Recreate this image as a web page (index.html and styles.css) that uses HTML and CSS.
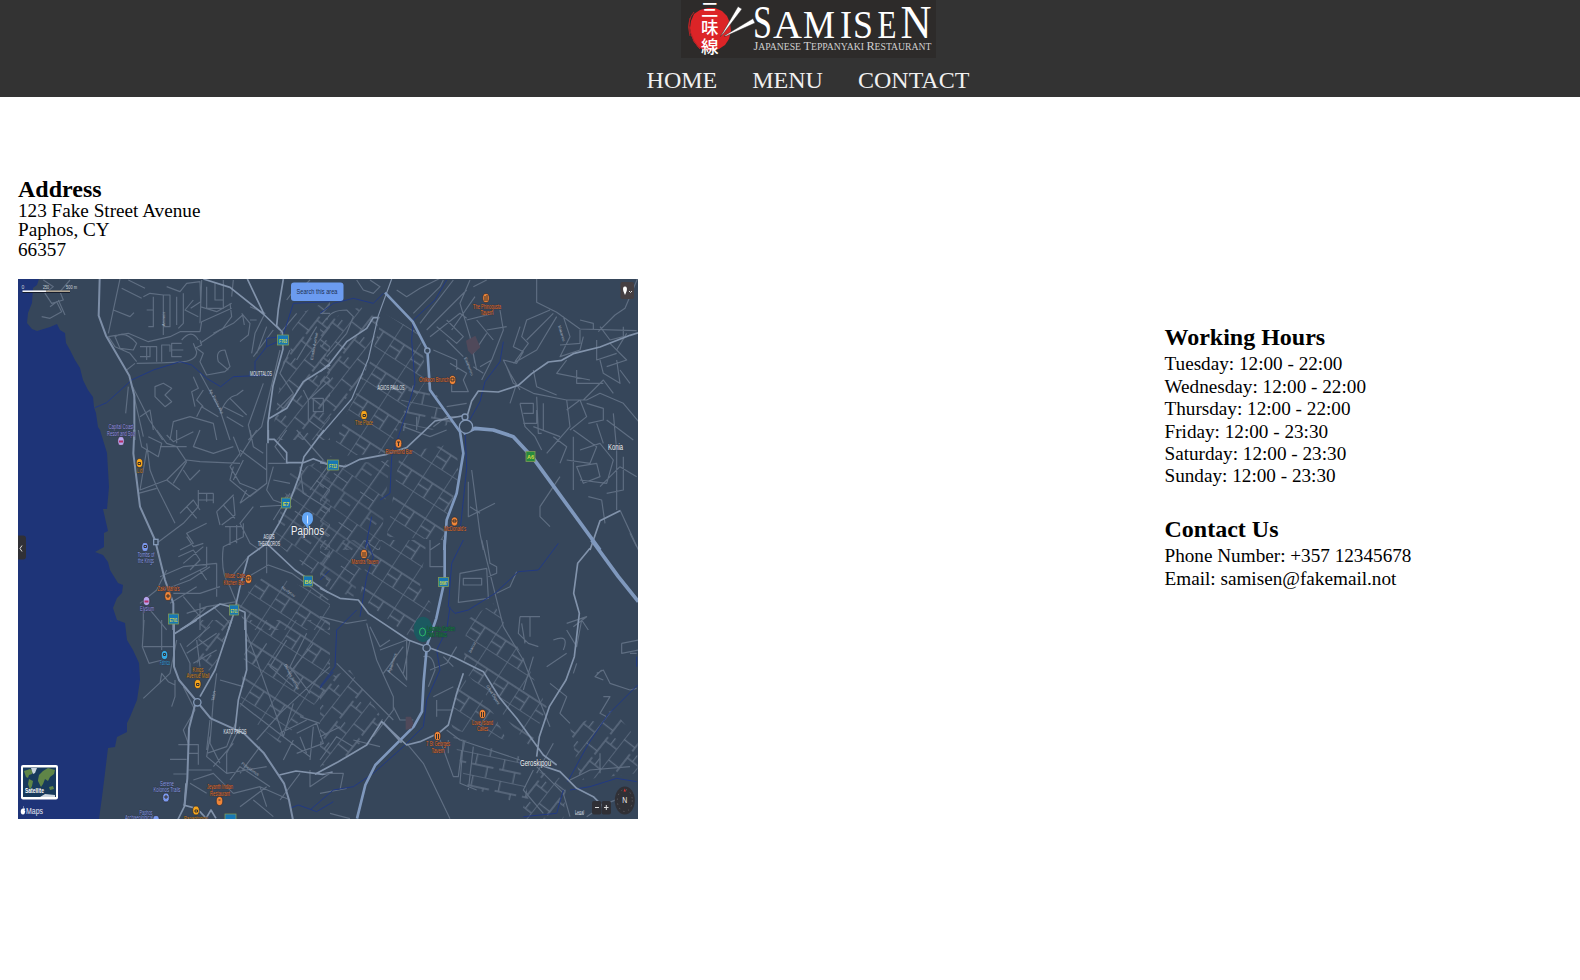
FILE: index.html
```html
<!DOCTYPE html>
<html lang="en">
<head>
<meta charset="utf-8">
<title>Samisen - Contact</title>
<link rel="stylesheet" href="styles.css">
</head>
<body>
<header class="header">
  <svg class="logo" viewBox="681 0 255 58" role="img" aria-label="Samisen">
    <rect class="logo-bg" x="681" y="0" width="255" height="58"/>
    <path class="logo-sun" d="M691 21l3-7 6-4 8-2 7 0 7 3 5 5 3 7 1 8-2 8-4 6-6 4-8 2-7-1-6-3-4-5-3-7-1-7z"/>
    <path class="logo-ring" d="M694 12q-7 8-4 19t10 18M690 18q-3 9 0 18M693 40l7 9"/>
    <g class="logo-kanji"><text x="701" y="16">三</text><text x="701" y="34">味</text><text x="701" y="53">線</text></g>
    <path class="logo-stick" d="M738 6.500l4 2.500L723 34l-2.500 2.500zM753 18.500l2 4.500-29 13-2 0z"/>
    <text class="logo-name" y="37.500"><tspan class="big" x="753" textLength="19" lengthAdjust="spacingAndGlyphs">S</tspan><tspan x="773" textLength="29" lengthAdjust="spacingAndGlyphs">A</tspan><tspan x="803" textLength="32" lengthAdjust="spacingAndGlyphs">M</tspan><tspan x="840" textLength="12" lengthAdjust="spacingAndGlyphs">I</tspan><tspan x="853" textLength="20" lengthAdjust="spacingAndGlyphs">S</tspan><tspan x="877.500" textLength="19" lengthAdjust="spacingAndGlyphs">E</tspan><tspan class="big" x="900.500" textLength="31" lengthAdjust="spacingAndGlyphs">N</tspan></text>
    <text class="logo-sub" x="753.500" y="50" textLength="178" lengthAdjust="spacingAndGlyphs"><tspan class="cap">J</tspan>APANESE <tspan class="cap">T</tspan>EPPANYAKI <tspan class="cap">R</tspan>ESTAURANT</text>
  </svg>
  <nav class="nav"><a>HOME</a><a>MENU</a><a>CONTACT</a></nav>
</header>
<main class="content">
  <section class="location">
    <h2>Address</h2>
    <p>123 Fake Street Avenue</p>
    <p>Paphos, CY</p>
    <p>66357</p>
    <svg class="map" viewBox="18 279 620 540" role="img" aria-label="Map of Paphos">
      <defs>
        <pattern id="gridA" width="62" height="84" patternUnits="userSpaceOnUse" patternTransform="rotate(33) scale(1.2)"><path class="st" d="M0 0H62M0 42H62M0 0V84M31 42V84M0 63H31"/></pattern>
        <pattern id="gridB" width="70" height="76" patternUnits="userSpaceOnUse" patternTransform="rotate(-52) scale(1.1)"><path class="st" d="M0 0H70M0 38H60M12 0V38M48 38V76M48 56H70"/></pattern>
        <pattern id="gridC" width="76" height="60" patternUnits="userSpaceOnUse" patternTransform="rotate(12) scale(1.1)"><path class="st" d="M0 0H76M0 30H60M10 0V30M44 30V60"/></pattern>
        <pattern id="gridD" width="96" height="112" patternUnits="userSpaceOnUse" patternTransform="rotate(35)"><path class="st" d="M0 0H96M0 56H96M0 28H50M14 0V112M50 0V56M60 56V112M60 80H96"/></pattern>
      </defs>
      <rect class="land" x="18" y="279" width="620" height="540"/>
      <path class="sea" d="M18 279H39L37 285 33 288 32 303 28 313 27 323 32 329 37 331 50 327 57 324 60 330 65 333 66 343 70 350 75 360 80 368 83 380 88 390 93 397 94 407 96 413 98 427 100 430 107 453 109 487 107 509 103 509 108 531 104 533V547L95 552 103 555 108 562 110 570 118 583 123 585 122 593 117 598 113 608 117 620 125 623 127 640 133 650 139 663 140 680 137 700 130 717 127 723V732L117 737 115 747 108 748 105 773 102 797 99 819H18z"/>

      <!-- north west -->
      <g transform="translate(0 160) scale(.33333)">
        <path fill="url(#gridB)" d="M850 600L990 450V840H815zM880 470L990 420V560L870 590z"/>
        <path class="st" d="M360 357L325 520M340 450l50 20 12-12M365 385l60 30M385 360l50 25M130 360l30 20-25 20 20 30 35-10-10-25 30-35M150 440l20-15 15 30-35 20-25-5M175 420l20 45"/>
        <path class="st" d="M430 410l20-10 40 5V525M460 410v90h-15M510 405V500H490V405zM530 410v85M550 400v90l-15 15M440 450h20M580 420l-25 30 40 20M600 490L605 360M500 380l40 15 20-25 40-5 2 60-30 20M600 440l50 15 45-25M620 380v65h50V360M645 370v50h25M700 360l-5 50"/>
        <path class="st" d="M325 530l60-10 60 25 65-15 30-15 60 0 5-30 90-40M600 540l5 15-20 10M600 550l60-40 40-20 28-25 5 30M690 430l5 40-30 40M545 540q30-35 50 0M325 530l20 30 45 20 20 25M345 530q30-20 65 20l-10 20-40-5zM410 610q80 0 140-5 40-5 40-30l-10-25M420 560h30v30h-30M440 600v-40h30v45M485 605v-50h25v20M545 550h-30v40h30M515 570h35"/>
        <path class="st" d="M590 565l20 15-10 25 20 40 55-10 15-15-15-50q-30 0-20 35l30 25M640 520l30-15M725 460l25 30-5 35-25 20M750 440l45 20-30 60-10 60M770 480h-20M800 500l-30 80M820 510l-60 80M840 570l-55 230-40 40M870 570l-30 70 40 60-50 50M790 670l-45 125 10 45"/>
        <path class="st" d="M380 630l25-20M398 680l20 40 30 60 40 60M385 680l-8 80M400 700l30 130M465 680l25-10 25 15-20 20 20 20-20 15-30-30zM420 770l30-20 10 60M510 840l10-55 50-15 70 20 10 50M580 650l15 35-20 10 10 45M600 640l60 110 30 90M610 690l-20 30 20 20M590 770l15-30 50 30M660 760q20-50 50-55l20-15M670 740l60 30M690 715l50 50M680 770l50 30M860 420l30-40 100 0M890 460l-50 60M930 360l-50 50M950 500l-60 100M910 690l15 30 65-60M925 720v60l40 30M940 715h30v40h-30z"/>
        <path class="river" d="M285 743L320 728 395 660 460 630 540 605 575 615 620 655 662 680 700 650 815 645M765 650l0-45 35-45 45-20 35-110 110-5M800 560v-25l45-5"/>
        <path class="road" d="M610 357l80 25 100 80 50 48M742 357l50 105M850 357l-15 90-5 50 17 20 2 50-30 110-15 110v63M805 777L860 745 910 665 990 615"/>
        <path class="roadb" d="M299 357l-3 110 22 60 70 120 15 60v133"/>
      </g>

      <!-- north east -->
      <g transform="translate(320 270) scale(.33333)">
        <path fill="url(#gridB)" d="M0 160L120 110 180 140 130 330 0 470z"/>
        <path fill="url(#gridA)" d="M190 130L300 190 320 330 250 440 200 550 30 560 80 430 140 310z"/>
        <path fill="url(#gridD)" d="M0 590L210 570 180 840H0z"/>
        <path fill="url(#gridC)" d="M250 350L330 340 400 460 300 490 230 480z"/>
        <path fill="url(#gridA)" d="M240 550L410 520 415 620 370 810 200 800z"/>
        <path class="st" d="M110 30l20 30 30 10 20-20-30-20M20 150q10-30 60-30l20 20-20 50-60 70M0 130h30M230 60l30 20 40-25 60-30M280 130l80-80 10-20M300 160L400 30M320 180L440 60M330 200l90-70 20 15M350 170l60 50 20-20-50-50M380 210l50 50M340 240l70 30v30M390 280l50 30-10 20 15 35-50 0 0-40M450 30l-30 70 30 100 15 80M460 50l40-20M465 80l-70 100M540 120l10 60-35 90-30 60M500 190l-40 60 10 50M470 150l50 60M520 130l-80 20M515 270l-35 20"/>
        <path class="st" d="M650 27v70l60 30 70 50 170 5M700 130l-80 80M710 140l-60 100-70 40M690 120l-70 30-15 50 20 20-40 55M600 170l-20 60 30 15-20 35-40-10 20 40 30 50M730 140l20 60-30 60 60-20 10-40M780 180v40l-60 5M780 150l40 10v20M840 170l30 40 40-10 0-30M835 185l50-50 30-20 38-90M830 210v60l60-20M870 220l50 50-60 20M920 190l-30 50M740 270l-30 40 100 20M840 270l10 40 50 30-10-70M770 300v40l80 0M900 300l30 40M640 300l10 50 60 25M560 290l20 50 60 30 100 20 60 0 40-20 70 30 50 60M570 400l20-60M600 400l15 70 30 30 20 40M600 400h40v30h-30M610 460h40v-40M650 380l5 110 10 0M670 400v80M740 390l10 80-70 80M740 420l40-30 20 50-50 40M790 390l60-60 30 40M800 400l50 15v35l-45 10M760 480l70 50-20 50-70-10M700 500l40 30-20 50M780 540l60-20 40 50-20 70-80-10M880 430l10 110 0 180M860 450l80 60M900 590l50 30M830 460l20 60M640 470l80 30M760 500v160M770 590l60-10 10 40-50 20zM840 650l60-60M910 560v100l-50 10M805 680l40 10 10 70"/>
        <path class="st" d="M720 620l-60 90 0 30 30 30M455 600l25 190 10 50M445 635v105l80-40M450 710l30 20M340 470l40-30 40 0M440 400l-60 10M250 470l80 30 50-20M290 440l0 40M460 290l30 20M500 180l60-10M900 720l60 130"/>
        <path class="river" d="M0 130l40-30 60-15 60 15 30-30M380 30l-35 60-65 60-5 60 10 130-30 100-40 120-5 110-30 20M550 215l-10 60-45 60-15 60-45 80 5 120-20 190M155 740l-20 100"/>
        <path class="road" d="M0 305l30-25 50-65 60-40 20-32h15"/><path class="road thin" d="M215 27l-40 110-30 130-50 120L0 498"/><path class="road" d="M0 578l75 12 45-22 80-15 60-20 85-80 80-15 15 5 15-50 20-30 60 3 60-20 40-35 50-35 40-5 35-20 80-20 90-35 50-15M900 722l-60 30-30 88"/>
        <path class="roadc" d="M195 68L278 155 322 240 330 360 420 485 430 550 410 670 380 750 373 840"/>
        <path class="roadd" d="M430 490l35-15 55 5 60 20 60 65L840 840"/>
        <circle class="round" cx="438" cy="470" r="20"/><circle class="round" cx="435" cy="441" r="9"/><circle class="round" cx="322" cy="242" r="8"/>
        <path class="building" d="M438 212l28-15 15 35-25 22-12-12z"/>
      </g>

      <!-- west -->
      <g transform="translate(0 430) scale(.33333)">
        <path fill="url(#gridD)" d="M870 130L990 80V480L820 330z"/>
        <path fill="url(#gridA)" d="M800 430L990 500V600H740L710 520z"/>
        <path class="st" d="M415 0l10 50 50 30 10-40-40-20M440 40l10 80 20 50 55 110M440 60l-20 120 80-30 60-60 40 5 120 5M470 0l30 40 30 10 30 45M500 15l20 20 60-30M600 0l-20 50 60 20 60-20M480 50l80 0M530 40v-40M700 20l20 50-30 40 30 50 50 20M700 110l-10 40 60 50 50-40M770 0l-50 80M720 60l80 60M730 90l-30 60M750 0l10 50 30 20M800 40v120l-80 60M820 110l-20 70 20 30 55 20M805 100l60 0M820 150l50 10M740 180l-20 40"/>
        <path class="st" d="M415 190l55-15M550 120l20 30 30-30M500 150l40 30M560 95l-40 65M595 190h45M595 210h45M595 180v50l-45 50-80 60M620 190v25M640 190v30M540 250l40-40 20 30M560 230l30 35M650 245l50-50-30 30 35 40M650 245l10 40M700 200l5 55-40 30M540 360l40-20-20-30 60-30M560 320l20 30 30-10M535 380l45-20 20 30-30 30M550 400l60-50M620 350v60l-80 40M600 420l20 30M670 350l60-30v-40M690 290v55M710 285v55M675 290h50M670 350q-10 80 20 120l20 50M650 400v100M480 440l70-30 100-10M490 480l80-30 60-40M520 490l80 0 60-20M510 520l80-50M550 500l50 60M560 550l60-20 90-15M600 520v80M450 540l50 60M430 600v-60M420 520l50-40 30-60M640 530l50 50M560 590l60-60M760 230l-40 50 30 60 30 20M780 230l80-5M745 380l-50 60M745 440l60-35 70 25 110 80M800 350l0 80M860 0l-35 50 30 40M890 0l80 90M820 270l50-80M900 110l10 80 80 50M930 180l60-80"/>
        <path class="river" d="M990 420l-30 30"/>
        <path class="road" d="M805 0v28h18l37 40v30h50l30-12 50 20M972 0l-60 80-15 60-30 80-30 60-35 60M800 340l-55 40-25 90-10 45M800 340l85 80 100 68M540 600l120-78 40 10 35 15v53M710 515l-5 25-20 60M860 98h30"/>
        <path class="roadb" d="M403 0l-3 70 20 160 45 100 30 120 25 70v80"/>
        <rect class="round" x="461" y="328" width="13" height="16"/>
      </g>

      <!-- south west -->
      <g transform="translate(0 620) scale(.33333)">
        <path fill="url(#gridA)" d="M740 0H990V200L840 370 720 270z"/>
        <path fill="url(#gridB)" d="M600 0H690L640 160 590 130z"/>
        <path class="st" d="M432 0l-5 80 20 50 40-10M485 0v90M430 80l90 0M530 60l-20 100-80 75M480 190l5-30 20 25 20 10M525 180v50l-10 30M540 70l30 60 0 40M560 80l70-60M560 100l90-60M580 130l70-40M600 140l-10-80M550 200l35 70-35 60 15 40M650 160l-10 80-10 130 30 60M660 180l70 20M740 40l30 80 60 170 20 60M800 70l-40 60M860 60l-50 80 70 60M920 40l-50 100 60 80M940 70l-80 100M990 140l-150 140-70 80M840 340l80-40M850 350l30-100M720 250l130 100 80 60M630 300l-10 90M510 418h50M520 462h40M535 374h60v60M565 400h30M565 450h70M630 350l-10 60 60 50 120-20M620 400l60-20 30-80M640 440l60-70M680 400v60M720 320l-40 80M720 460l60-80M690 480l30-40 90 60M580 480l60-20 60 60M570 490l50 30M700 520l80-20 90 40M720 560l80-60M780 500l20 60M760 540l60 50M900 460l-60 80M930 450v50l60-40M890 340l60-30 20 60-80 30M900 350l20 50M940 320l-10 100M880 360l-30 60M900 290l60 20"/>
        <path class="river" d="M960 205l40-50M870 565l25-10 55 20 50-30"/>
        <path class="road" d="M590 0l-68 42M695 0l-50 150-45 80M737 0l3 150-25 90-10 90M550 555l30 8 20 12 18 20 15-25 15 25M558 490l-5 70-20 40M838 465l50-12 80 10 30-7"/>
        <path class="roadb" d="M522 0v140l15 40 50 60 45 55 100 45 60 60 60 90 15 50 12 60M585 255l-18 70-5 150-8 80"/>
        <circle class="round" cx="592" cy="247" r="11"/>
      </g>

      <!-- south east -->
      <g transform="translate(320 540) scale(.33333)">
        <path fill="url(#gridD)" d="M0 0H150L100 170 0 140z"/>
        <path fill="url(#gridA)" d="M150 0H320L300 140 340 200 280 300 120 170z"/>
        <path fill="url(#gridA)" d="M440 240L520 190 620 370 680 500 630 620 520 490 430 390z"/>
        <path fill="url(#gridB)" d="M0 420L90 390 190 540 80 650 0 680z"/>
        <path fill="url(#gridC)" d="M400 590L600 650 630 800 440 740z"/>
        <path fill="url(#gridA)" d="M420 400L520 520 560 600 400 570 390 540z"/>
        <path fill="url(#gridB)" d="M750 560L880 510 953 600V700L780 720zM640 690L740 720 730 836H600z"/>
        <path class="st" d="M330 30l30-20M330 0v80l40 0M420 100l80-15 5 90-90 12zM430 115h55v20h-55zM500 0l10 70 20 10v20l-25 10M485 0l35 140 30 120 60 100 80 200M530 160l40-20 20-45M600 230l60 0M600 230l-5 50 30 30 30 10M605 250l10 60M630 230v60M700 300q50-20 30 30M740 250l60-20-40 30M740 270l30 50 15-80 20 30M770 370l-10 30M905 310l50-10M905 310v30l50-10M930 340l20 0M830 400l20-10 20 40 60 20 20-5M850 420l-25-10 20-20M850 470l20 0-30 50 20 10M640 350l-30 100M680 380l60-40M690 430l50 40-20 50 30 30M0 230l80 20 60-10M50 370l170 170M140 250l30 110 50 110v40l-60 80M150 260l30 60 30-20M180 330l80-30 0 120-30-50M200 390l60 50M190 400l60-80M310 350q30-10 35 40l-20 50M330 390l50-20 30-50M340 470l60-30M350 510l50 0M270 300l-20 100M380 570l40 30 180 60M0 660l50-70 50 30M0 590l60-30M100 600l80 20M10 700l60 0-10 50M0 760l80-15M30 820l60 16"/>
        <path class="st" d="M260 610l50 60 80 166M360 600l40 110 15 0 10-80M385 600v40M430 600l-10 130 50 20M460 620l-15 130M370 350l30 30M350 530l0-50M750 720l60-30 120-10M840 700v-60M640 690l-30 60 60 70M650 680l80 80 20 70M800 830l60-40 80-30M950 20l-20-40M700 610l-50 90M220 500l20 40h40"/>
        <path class="river" d="M430 0l-35 70-10 130 20 20 40-10 80-50 70-65 60-5 60-80M390 200l-10 70-30 60 10 60-40 90-10 80-60 60-90 80-60 40-60 10-70 60M140 0l20 50-20 60-20 120M110 210l-60 60-5 110L0 440M953 435l-90 90-60 90-60 110M750 750l60-10 80-25 60 10M950 350v30M730 750l-20 70-100 10"/>
        <path class="road" d="M0 145l60 30 55 5 30 40 60 40 60 40 55 20 80 30 90 45 50 80 50 60 80 110 40 30M430 400l-20 60-25 95-30 25-55 25-40 10-75-70-45 70-85 50-70 38M810 25l-37 45-12 90 17 60-15 130-25 70-50 80-30 90-8 60M660 675l60 20 50 50 50 25 40 40"/>
        <path class="roadc" d="M374 0v120l-25 115-28 80-10 110-5 90-25 45-115 115-30 60-25 101"/>
        <path class="roadd" d="M815 0l80 110 60 75"/>
        <path class="roadb" d="M190 548l55 60"/>
        <circle class="round" cx="320" cy="324" r="11"/>
        <ellipse class="park" cx="309" cy="268" rx="28" ry="38"/>
        <path class="building" d="M257 530h16l7 20-5 15-18 5z"/>
      </g>

      <!-- road shields -->
      <g class="shield">
        <rect x="277.500" y="335" width="11" height="10"/><rect x="327.500" y="460" width="11" height="10"/><rect x="281.500" y="498" width="9" height="10"/><rect x="303.500" y="576" width="9" height="10"/><rect x="438.500" y="577.500" width="10" height="9"/><rect x="229.500" y="605" width="9" height="10"/><rect x="168.500" y="614" width="10" height="10"/><rect x="225" y="814" width="11" height="9"/>
        <rect class="green" x="526" y="451.500" width="9" height="10"/>
      </g>
      <g class="shield-text">
        <text x="283" y="342.500" textLength="8" lengthAdjust="spacingAndGlyphs">F703</text><text x="333" y="467.500" textLength="8" lengthAdjust="spacingAndGlyphs">F712</text><text x="286" y="505.500">E7</text><text x="308" y="583.500">B6</text><text x="443.500" y="584.500" textLength="8" lengthAdjust="spacingAndGlyphs">B6M7</text><text x="234" y="612.500" textLength="7" lengthAdjust="spacingAndGlyphs">E701</text><text x="173.500" y="621.500" textLength="8" lengthAdjust="spacingAndGlyphs">E701</text><text x="530.500" y="459">A6</text>
      </g>

      <!-- places of interest -->
      <g class="poi orange">
        <ellipse cx="486" cy="298" rx="3.300" ry="4.500"/><ellipse cx="452.500" cy="380" rx="3.300" ry="4.500"/><ellipse cx="398.500" cy="443.500" rx="3.300" ry="4.500"/><ellipse cx="454.500" cy="521.500" rx="3.300" ry="4.500"/><ellipse cx="364" cy="554" rx="3.300" ry="4.500"/><ellipse cx="248.500" cy="579" rx="3.300" ry="4.500"/><ellipse cx="168" cy="596" rx="3.300" ry="4.500"/><ellipse cx="482.500" cy="714" rx="3.300" ry="4.500"/><ellipse cx="437.500" cy="736" rx="3.300" ry="4.500"/><ellipse cx="219.500" cy="801" rx="3.300" ry="4.500"/>
        <path class="mark" d="M485 296v5M487 295v6M451 378h3v3h-3zM397 442h3M398.500 442v4M453 520h3v2h-3zM363 552v5M365 552v5M247 577h3v3h-3zM167 595h2v2h-2zM481.500 712v5M483.500 712v5M436.500 734v5M438.500 734v5M218.500 800h2"/>
        <text x="487" y="308.500" textLength="28" lengthAdjust="spacingAndGlyphs">The Phinogusta</text><text x="487" y="314.500" textLength="13" lengthAdjust="spacingAndGlyphs">Tavern</text><text x="434" y="382" textLength="30" lengthAdjust="spacingAndGlyphs">Onikoon Brunch</text><text x="399" y="453.500" textLength="27" lengthAdjust="spacingAndGlyphs">Richmond Bar</text><text x="455" y="531" textLength="22" lengthAdjust="spacingAndGlyphs">McDonald's</text><text x="365" y="564" textLength="27" lengthAdjust="spacingAndGlyphs">Mandra Tavern</text><text x="235" y="578" textLength="20" lengthAdjust="spacingAndGlyphs">Muse Cafe</text><text x="234" y="584.500" textLength="21" lengthAdjust="spacingAndGlyphs">Kitchen Bar</text><text x="168.500" y="590.500" textLength="22" lengthAdjust="spacingAndGlyphs">Zaki Maria's</text><text x="482.500" y="724.500" textLength="21" lengthAdjust="spacingAndGlyphs">Love Island</text><text x="482.500" y="730.500" textLength="11" lengthAdjust="spacingAndGlyphs">Cakes</text><text x="438" y="746" textLength="24" lengthAdjust="spacingAndGlyphs">7 St Georges</text><text x="438" y="752.500" textLength="13" lengthAdjust="spacingAndGlyphs">Tavern</text><text x="220" y="789" textLength="26" lengthAdjust="spacingAndGlyphs">Jeyanth Indian</text><text x="220" y="795.500" textLength="20" lengthAdjust="spacingAndGlyphs">Restaurant</text>
      </g>
      <g class="poi yellow">
        <ellipse cx="364" cy="415" rx="3.300" ry="4.500"/><ellipse cx="139.500" cy="463" rx="3.300" ry="4.500"/><ellipse cx="197.700" cy="684" rx="3.300" ry="4.500"/><ellipse cx="196" cy="810.500" rx="3.300" ry="4.500"/>
        <path class="mark" d="M363 414.500h2.500v2h-2.500zM138 462.500h2.500v2h-2.500zM196.500 683.500h2.500v2h-2.500zM195 810h2.500v2h-2.500z"/>
        <text x="364" y="425" textLength="18" lengthAdjust="spacingAndGlyphs">The Place</text><text x="140" y="473" textLength="6" lengthAdjust="spacingAndGlyphs">Lidl</text><text x="198" y="672" textLength="11" lengthAdjust="spacingAndGlyphs">Kings</text><text x="198" y="678" textLength="23" lengthAdjust="spacingAndGlyphs">Avenue Mall</text><text x="196" y="820.500" textLength="24" lengthAdjust="spacingAndGlyphs">Papantoniou</text>
      </g>
      <g class="poi blue">
        <ellipse cx="145" cy="547" rx="3.300" ry="4.500"/><ellipse cx="166" cy="797.500" rx="3.300" ry="4.500"/><ellipse cx="156" cy="820" rx="3.300" ry="4.500"/>
        <path class="mark" d="M144 545.500h2.500v2h-2.500zM165 796h2v2h-2z"/>
        <text x="146" y="557" textLength="17" lengthAdjust="spacingAndGlyphs">Tombs of</text><text x="146" y="563" textLength="16" lengthAdjust="spacingAndGlyphs">the Kings</text><text x="167" y="785.500" textLength="14" lengthAdjust="spacingAndGlyphs">Serene</text><text x="167" y="791.500" textLength="27" lengthAdjust="spacingAndGlyphs">Kolonos Trails</text><text x="146" y="814.500" textLength="13" lengthAdjust="spacingAndGlyphs">Paphos</text><text x="139" y="820" textLength="28" lengthAdjust="spacingAndGlyphs">Archaeological</text>
      </g>
      <g class="poi violet">
        <ellipse cx="121" cy="441" rx="3.300" ry="4.500"/><ellipse cx="146.500" cy="601" rx="3.300" ry="4.500"/>
        <path class="bed" d="M119 441.500h4M144.500 601.500h4"/>
        <text x="121" y="429" textLength="25" lengthAdjust="spacingAndGlyphs">Capital Coast</text><text x="121" y="435.500" textLength="28" lengthAdjust="spacingAndGlyphs">Resort and Spa</text><text x="147" y="611" textLength="14" lengthAdjust="spacingAndGlyphs">Elysium</text>
      </g>
      <g class="poi cyan"><ellipse cx="164.500" cy="655" rx="3.300" ry="4.500"/><path class="mark" d="M163.500 653.500h2v2h-2z"/><text x="165" y="665" textLength="10" lengthAdjust="spacingAndGlyphs">Fabrica</text></g>
      <g class="poi garden"><ellipse class="outline" cx="422.500" cy="632" rx="3" ry="4"/><text x="441" y="631" textLength="28" lengthAdjust="spacingAndGlyphs">Latomia Garden</text><text x="437" y="637" textLength="20" lengthAdjust="spacingAndGlyphs">Park Rikkos</text></g>

      <!-- towns and districts -->
      <g class="district">
        <text x="261" y="376" textLength="22" lengthAdjust="spacingAndGlyphs">MOUTTALOS</text><text x="391" y="389.500" textLength="27" lengthAdjust="spacingAndGlyphs">AGIOS PAVLOS</text><text x="269" y="539" textLength="11" lengthAdjust="spacingAndGlyphs">AGIOS</text><text x="269" y="546" textLength="22" lengthAdjust="spacingAndGlyphs">THEODOROS</text><text x="235" y="733.500" textLength="23" lengthAdjust="spacingAndGlyphs">KATO PAFOS</text>
      </g>
      <text class="town" x="615.500" y="450" textLength="15" lengthAdjust="spacingAndGlyphs">Konia</text>
      <text class="town" x="535.500" y="765.500" textLength="31" lengthAdjust="spacingAndGlyphs">Geroskipou</text>
      <path class="pin" d="M307.500 529l-2-4q-3.500-2.500-3.500-6 0-7 5.500-7t5.500 7q0 3.500-3.500 6z"/>
      <path class="pinmark" d="M307.500 515.500v8"/>
      <text class="city" x="307.500" y="534.500" textLength="33" lengthAdjust="spacingAndGlyphs">Paphos</text>
      <g class="streetname">
        <text transform="translate(313 360) rotate(-80)">Ellados Avenue</text><text transform="translate(209 390) rotate(63)">Ap. Pavlou Ave</text><text transform="translate(471 653) rotate(-64)">Ikarou</text><text transform="translate(486 686) rotate(58)">Griva Digeni</text><text transform="translate(390 673) rotate(-70)">Agapinoros</text><text transform="translate(284 665) rotate(62)">Danaes Avenue</text><text transform="translate(164.500 326) rotate(-90)">Arsinois</text><text transform="translate(214 701) rotate(-80)">Tafon</text><text transform="translate(241 764) rotate(36)">Poseidonos</text><text transform="translate(464 358) rotate(68)">Eleftheriou</text><text transform="translate(558 326) rotate(73)">Makariou</text><text transform="translate(281 588) rotate(35)">Neofytou</text>
      </g>

      <!-- map controls -->
      <path class="scale-shadow" d="M22.500 292.500H70"/><path class="scale" d="M22.500 291.200H46"/><path class="scale-end" d="M46 291.200H70"/>
      <g class="scale-text"><text x="23" y="288.500">0</text><text x="46" y="288.500" textLength="6" lengthAdjust="spacingAndGlyphs">250</text><text x="71.500" y="288.500" textLength="11" lengthAdjust="spacingAndGlyphs">500 m</text></g>
      <rect class="search" x="291" y="282.500" width="52.500" height="18.500" rx="3"/>
      <text class="search-text" x="317" y="294" textLength="41" lengthAdjust="spacingAndGlyphs">Search this area</text>
      <rect class="control brown" x="620.500" y="282" width="13.500" height="17" rx="2"/>
      <path class="white" d="M625 295l-1.700-4q-1-4.500 1.700-4.500t1.700 4.500z"/><path class="chev" d="M629 291l1.500 1.500 1.500-1.500"/>
      <path class="control" d="M18 535.500h5q3 0 3 3v18q0 3-3 3h-5z"/><path class="chev" d="M22 545.500l-2 3 2 3"/>
      <rect class="white" x="21" y="765" width="37" height="34.500" rx="2"/><rect class="satellite" x="23" y="767.500" width="33" height="29.500"/>
      <path class="continents" d="M24 771l6-2 3 2-1 3-3 1-1 3-2-1zM29 779l4 2-1 5-2 4-2-6zM38 780l1-5 4-4 5-3 7 2-1 4-4 3-2 4-3-2-2 5-2 3-3-6zM49 787l4-1 1 3-4 1z"/>
      <path class="ice" d="M31 768h6l-2 5-2 1zM40 797h15v-2l-10-1z"/>
      <text class="sat-text" x="25" y="793" textLength="19" lengthAdjust="spacingAndGlyphs">Satellite</text>
      <path class="white" d="M23 808q.2-1.500 1-2 .2 1.500-1 2zM22.700 808.500q2-.8 2.300.4-1 1.600.3 2.600-.8 3.500-2.300 2.800-1.500.7-2.200-1.700-.4-3.500 1.900-4.100z"/>
      <text class="maps-text" x="26" y="814" textLength="17" lengthAdjust="spacingAndGlyphs">Maps</text>
      <text class="legal" x="579.500" y="813.500" textLength="9" lengthAdjust="spacingAndGlyphs">Legal</text>
      <rect class="control" x="592" y="801" width="9.300" height="13.500" rx="2"/><rect class="control" x="601.700" y="801" width="9.300" height="13.500" rx="2"/><path class="chev" d="M595 807.500h4M604 807.500h4.500M606.300 805v5"/>
      <ellipse class="control" cx="624.800" cy="800.500" rx="10" ry="14"/><ellipse class="dial" cx="624.800" cy="800.500" rx="7.500" ry="11"/><path class="red" d="M624.800 788.500l1.200 3h-2.400z"/>
      <text class="north" x="624.800" y="803" textLength="5" lengthAdjust="spacingAndGlyphs">N</text>
    </svg>
  </section>
  <section class="details">
    <h2>Working Hours</h2>
    <ul>
      <li>Tuesday: 12:00 - 22:00</li><li>Wednesday: 12:00 - 22:00</li><li>Thursday: 12:00 - 22:00</li><li>Friday: 12:00 - 23:30</li><li>Saturday: 12:00 - 23:30</li><li>Sunday: 12:00 - 23:30</li>
    </ul>
    <h2>Contact Us</h2>
    <ul><li>Phone Number: +357 12345678</li><li>Email: samisen@fakemail.not</li></ul>
  </section>
</main>
</body>
</html>
```
FILE: styles.css
```css
* { box-sizing: border-box; margin: 0; padding: 0; }
body { font-family: "Liberation Serif", serif; background: #fff; color: #000; }
.header { height: 97px; padding-left: 37px; background: #333; display: flex; flex-direction: column; align-items: center; }
.logo { display: block; width: 255px; height: 58px; overflow: visible; }
.nav { display: flex; gap: 35px; padding: 9px 1px 0 0; font-size: 24px; line-height: 27px; color: #f0f0f0; }
.content { display: flex; justify-content: space-between; padding: 79.7px 0 0 18px; }
.location { width: 620px; font-size: 19.2px; line-height: 19.5px; }
h2 { font-size: 24px; line-height: 24px; }
.map { display: block; width: 620px; height: 540px; margin-top: 19.8px; overflow: hidden; }
.details { width: 415.5px; padding-top: 148.3px; font-size: 19.2px; line-height: 22.4px; }
.details ul { list-style: none; padding-top: 4.4px; margin-bottom: 29.2px; }

.logo-bg { fill: #2d2b2a; }
.logo-sun { fill: #dc2427; }
.logo-ring { fill: none; stroke: #b52326; stroke-width: 1; }
.logo-kanji { fill: #fff; font: 500 17.5px "Noto Sans CJK JP", sans-serif; }
.logo-stick { fill: #fff; stroke: #2d2b2a; stroke-width: .5; }
.logo-name { fill: #fff; font-size: 40px; }
.logo-name .big { font-size: 46px; }
.logo-sub { fill: #d0d0d0; font-size: 9.5px; }
.logo-sub .cap { font-size: 12px; }

.land { fill: #36465a; }
.sea { fill: #1e3478; }
.st, .river, .road, .roadb, .roadc, .roadd { fill: none; stroke-linejoin: round; }
.st { stroke: #5f6e82; stroke-width: 3.5; }
.river { stroke: #213984; stroke-width: 3; }
.road { stroke: #8293ab; stroke-width: 5; }
.thin { stroke-width: 3.5; }
.roadb { stroke: #7d8ea7; stroke-width: 6; }
.roadc { stroke: #7f98bd; stroke-width: 8; }
.roadd { stroke: #7f98bd; stroke-width: 11; }
.round { fill: #36465a; stroke: #8398b6; stroke-width: 4; }
.building { fill: #50495a; }
.park { fill: #1b5960; }
.shield rect { fill: #1777b5; stroke: #7f9b56; stroke-width: .8; }
.shield .green { fill: #278a3e; }
.shield-text { fill: #d4d743; font: bold 5.5px "Liberation Sans", sans-serif; text-anchor: middle; }
.poi text { text-anchor: middle; font: 6.3px "Liberation Sans", sans-serif; paint-order: stroke; stroke: #292d39; stroke-width: .7px; }
.poi ellipse { stroke: #2e2c35; stroke-width: .7; }
.mark { fill: none; stroke: #37302d; stroke-width: 1; }
.orange { fill: #f08537; }
.orange text { fill: #e8742c; }
.yellow { fill: #f6a51c; }
.yellow text { fill: #d38a24; }
.blue { fill: #7b9af0; }
.blue text { fill: #8ba1ea; }
.violet { fill: #b5a5ed; }
.violet text { fill: #9a9bea; }
.bed { stroke: #b42f67; stroke-width: 2; }
.cyan { fill: #35a8e2; }
.garden { fill: #2a9e52; }
.garden text { fill: #1d8442; stroke: #163d38; }
.garden .outline { fill: none; stroke: #2bba67; stroke-width: 1; }
.district { fill: #e5e9ee; font: 7.5px "Liberation Sans", sans-serif; text-anchor: middle; }
.town, .city { fill: #f0f2f5; font: 8.5px "Liberation Sans", sans-serif; text-anchor: middle; paint-order: stroke; stroke: #334052; stroke-width: 1px; }
.city { font-size: 13px; }
.pin { fill: #63a6f5; }
.pinmark { stroke: #d5e8ff; stroke-width: 1; }
.streetname { fill: #a2adbd; font: 4px "Liberation Sans", sans-serif; }
.scale { stroke: #fff; stroke-width: 1.5; }
.scale-end { stroke: #b7aa96; stroke-width: 1.5; }
.scale-shadow { stroke: #151c2c; stroke-width: 1; }
.scale-text { fill: #d1d5db; font: 5px "Liberation Sans", sans-serif; text-anchor: middle; }
.search { fill: #6b9bf0; }
.search-text { fill: #1d2f50; font: 6.5px "Liberation Sans", sans-serif; text-anchor: middle; }
.control { fill: #303036; }
.brown { fill: #453f42; }
.white { fill: #fff; }
.chev { fill: none; stroke: #e0e0e0; stroke-width: 1; }
.satellite { fill: #183a5c; }
.continents { fill: #5f8547; }
.ice { fill: #cbd5de; }
.sat-text { fill: #fff; font: bold 6.5px "Liberation Sans", sans-serif; }
.maps-text { fill: #e6e9f1; font: 9px "Liberation Sans", sans-serif; }
.legal { fill: #d7dce2; font: 5px "Liberation Sans", sans-serif; text-anchor: middle; text-decoration: underline; }
.dial { fill: none; stroke: #66666b; stroke-width: 1; stroke-dasharray: 1 4; }
.red { fill: #e33431; }
.north { fill: #eee; font: 9px "Liberation Sans", sans-serif; text-anchor: middle; }
```
